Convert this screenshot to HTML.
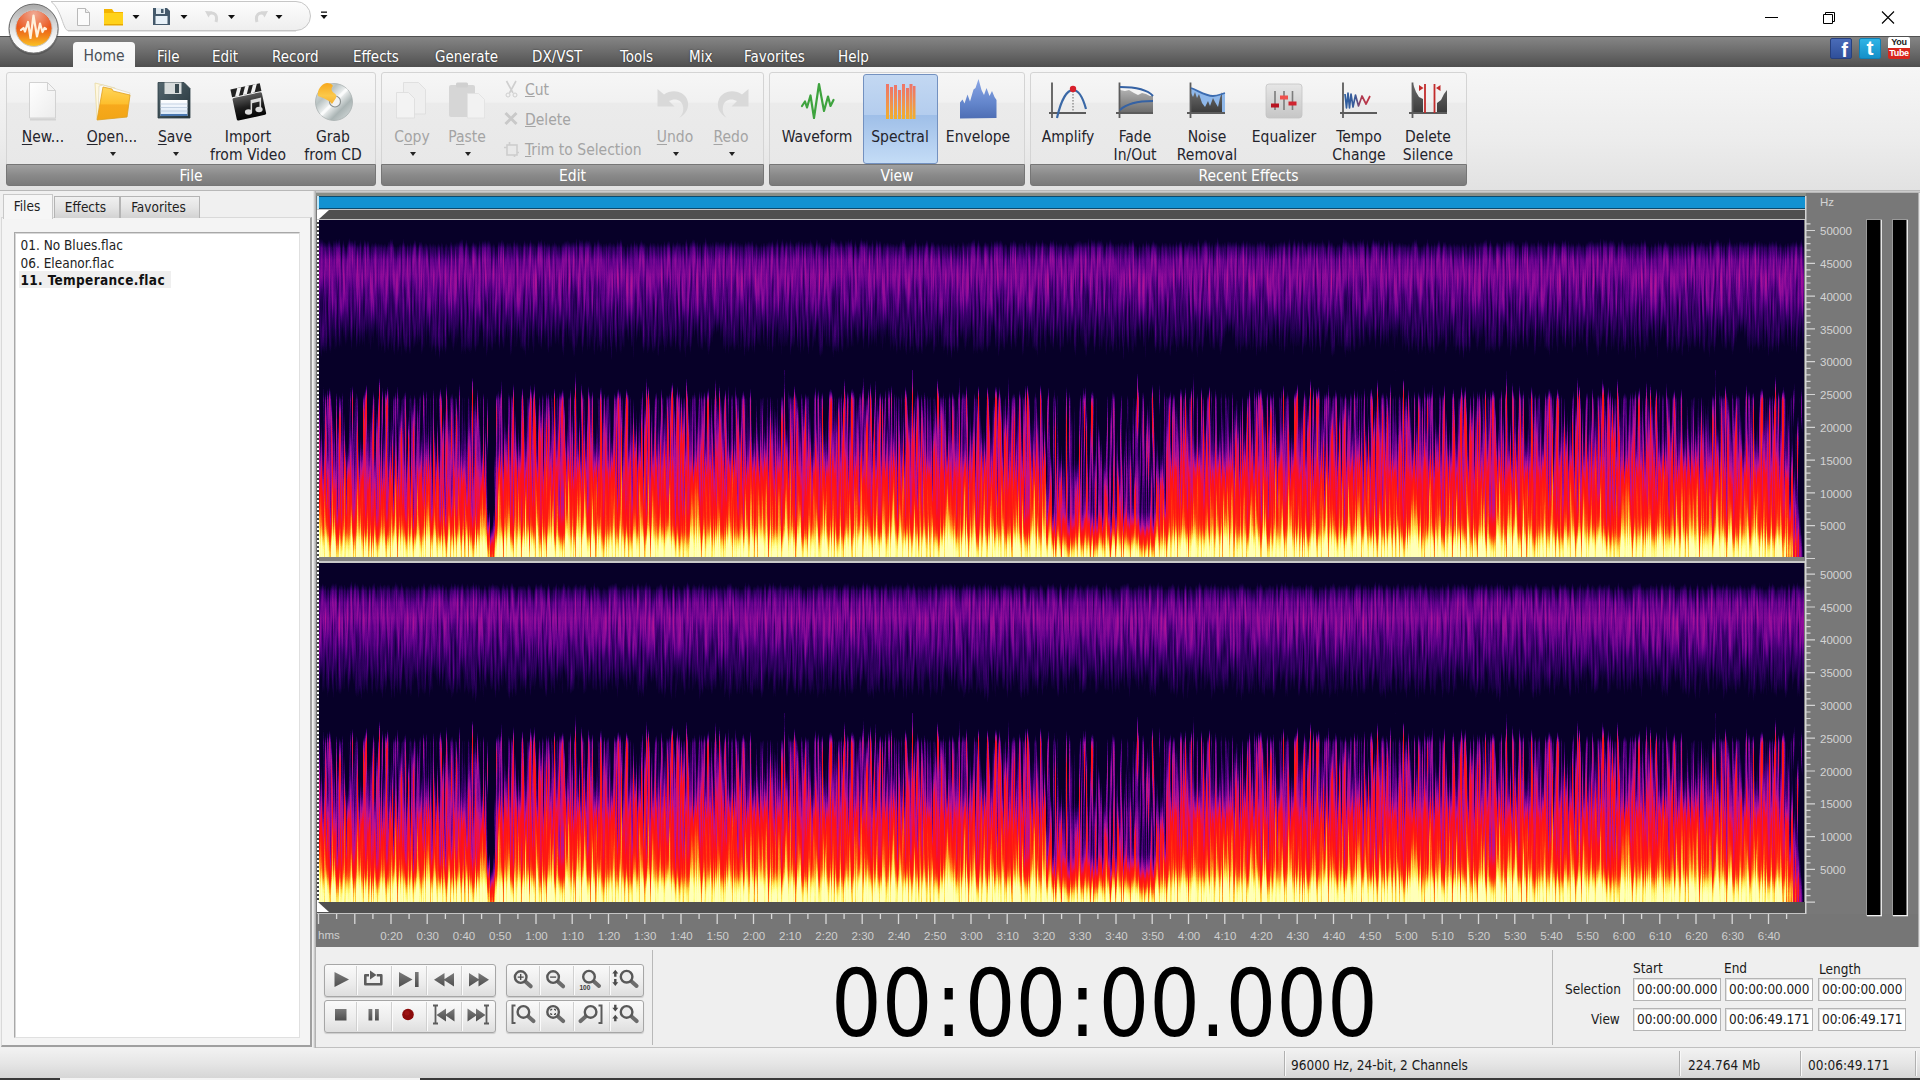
<!DOCTYPE html>
<html lang="en"><head><meta charset="utf-8"><title>Audio Editor</title>
<style>
html,body{margin:0;padding:0;width:1920px;height:1080px;overflow:hidden;background:#f0f0f0;font-family:"DejaVu Sans Condensed","Liberation Sans",sans-serif;}
*{box-sizing:border-box}
.abs{position:absolute}
#titlebar{left:0;top:0;width:1920px;height:36px;background:#fff}
#menubar{left:0;top:36px;width:1920px;height:32px;background:linear-gradient(#858585 0%,#6d6d6d 45%,#565656 85%,#4c4c4c 100%);border-top:1px solid #505050}
#ribbon{left:0;top:67px;width:1920px;height:124px;background:linear-gradient(#f6f6f6,#ececec 60%,#e2e2e2);border-bottom:1px solid #b8b8b8}
.mtab{position:absolute;top:47.5px;height:18px;color:#fff;font-size:15px;line-height:18px;white-space:nowrap;text-shadow:0 0 2px rgba(0,0,0,.6)}
#hometab{left:73px;top:42px;width:62px;height:26px;background:linear-gradient(#fafafa,#f4f4f4);border-radius:4px 4px 0 0;color:#4a5058;font-size:15.5px;line-height:29px;text-align:center}
.grp{position:absolute;top:72px;height:114px;border:1px solid #d4d4d4;border-radius:3px;background:linear-gradient(#f6f6f6 0%,#f1f1f1 26%,#ebebeb 27%,#e7e7e7 100%)}
.grp .lbl{position:absolute;left:-1px;right:-1px;bottom:-1px;height:22px;background:linear-gradient(#a0a0a0,#8a8a8a 50%,#7a7a7a);border:1px solid #767676;border-radius:0 0 3px 3px;color:#fff;font-size:15.5px;line-height:23px;text-align:center}
.rb{position:absolute;font-size:15.5px;line-height:17.5px;color:#24242c;text-align:center;white-space:nowrap;transform:translateX(-50%)}
.rb.dis{color:#a4a4a4}
.rb u{text-decoration-thickness:1px;text-underline-offset:2px}
.arr{position:absolute;width:0;height:0;border-left:3.5px solid transparent;border-right:3.5px solid transparent;border-top:4px solid #222}
.sb{position:absolute;font-size:15.5px;color:#a4a4a4;white-space:nowrap;line-height:18px}
</style></head><body>
<div id="titlebar" class="abs"></div>
<div id="menubar" class="abs"></div>
<div id="ribbon" class="abs"></div>
<!-- quick access toolbar -->
<svg class="abs" id="qat" style="left:44px;top:0" width="272" height="36" viewBox="44 0 272 36"><defs><linearGradient id="qg" x1="0" y1="0" x2="0" y2="1"><stop offset="0" stop-color="#fdfdfd"/><stop offset="1" stop-color="#eeeeee"/></linearGradient></defs>
<path d="M51 1.500H296a14.500 14.500 0 0 1 0 29H68C63 30.500 62 10 51 1.500z" fill="url(#qg)" stroke="#c6c6c6" stroke-width="1"/><path d="M68 31.500H296" stroke="#e4e4e4" stroke-width="1"/></svg>
<svg class="abs" style="left:60px;top:0" width="280" height="36" viewBox="60 0 280 36">
 <!-- new doc -->
 <path d="M77.5 8.5h8l4 4v13h-12z" fill="#fbfbfb" stroke="#b9b9b9"/><path d="M85.5 8.5v4h4" fill="#eee" stroke="#b9b9b9"/>
 <!-- folder -->
 <path d="M104 9h8l2 3h9v13h-19z" fill="#f4b400"/><path d="M104 13h19v12h-19z" fill="#ffd21a"/><path d="M104 24h19v1.500h-19z" fill="#e6a800"/>
 <!-- save -->
 <path d="M153 8h14l3 3v14h-17z" fill="#44596b"/><rect x="156" y="8" width="9" height="6" fill="#dfe8ee"/><rect x="161" y="9" width="2.500" height="4" fill="#44596b"/><rect x="155.500" y="16" width="12" height="8" fill="#e8f1f8"/>
 <!-- undo / redo (disabled) -->
 <path d="M208 14c6-3 10 1 8 8" fill="none" stroke="#d6d6d6" stroke-width="3"/><path d="M205 11l7 .5-3.500 6z" fill="#d6d6d6"/>
 <path d="M265 14c-6-3-10 1-8 8" fill="none" stroke="#d6d6d6" stroke-width="3"/><path d="M268 11l-7 .5 3.500 6z" fill="#d6d6d6"/>
 <!-- dropdown arrows -->
 <g fill="#111"><path d="M132.500 15h7l-3.500 4z"/><path d="M180.500 15h7l-3.500 4z"/><path d="M228 15h7l-3.500 4z"/><path d="M275.500 15h7l-3.500 4z"/>
 <path d="M320.500 15h7l-3.500 4z"/><rect x="321" y="11.500" width="6" height="1.300"/></g>
</svg>
<!-- app orb -->
<svg class="abs" style="left:4px;top:0" width="62" height="60" viewBox="4 0 62 60">
 <defs>
  <linearGradient id="orbR" x1="0" y1="0" x2="0" y2="1"><stop offset="0" stop-color="#a9a9a9"/><stop offset="0.35" stop-color="#d2d2d2"/><stop offset="0.7" stop-color="#f6f6f6"/><stop offset="1" stop-color="#ffffff"/></linearGradient>
  <linearGradient id="orbC" x1="0" y1="0" x2="0" y2="1"><stop offset="0" stop-color="#e2552a"/><stop offset="0.45" stop-color="#ea5518"/><stop offset="0.72" stop-color="#f2861a"/><stop offset="1" stop-color="#fbc426"/></linearGradient>
  <radialGradient id="orbG" cx="0.5" cy="0.1" r="0.6"><stop offset="0" stop-color="#fff" stop-opacity=".5"/><stop offset="1" stop-color="#fff" stop-opacity="0"/></radialGradient>
 </defs>
 <circle cx="33.600" cy="29.600" r="25.500" fill="rgba(0,0,0,.16)"/>
 <circle cx="33.600" cy="28.600" r="24.500" fill="url(#orbR)" stroke="#6e6e6e" stroke-width="1"/>
 <circle cx="33.900" cy="28.300" r="18.200" fill="url(#orbC)" stroke="#c9c9c9" stroke-width="1"/>
 <circle cx="33.900" cy="28.300" r="17.600" fill="url(#orbG)"/>
 <path d="M21 30l2.500-2 1.500 3.500 3-9.500 2.500 16 3-22.500 3.500 21 3-13 2.500 8.500 2-4 1.500 1" fill="none" stroke="#fff1dc" stroke-width="2.200" stroke-linejoin="round" stroke-linecap="round"/>
</svg>
<!-- window controls -->
<svg class="abs" style="left:1750px;top:0" width="170" height="36" viewBox="1750 0 170 36">
 <path d="M1765 17.500h13" stroke="#000" stroke-width="1"/>
 <path d="M1823.500 14.500h9v9h-9z M1825.500 14.500v-2h9v9h-2" fill="none" stroke="#000" stroke-width="1"/>
 <path d="M1882 11.500l12 12m0-12l-12 12" stroke="#000" stroke-width="1.100"/>
</svg>
<!-- social icons -->
<div class="abs" style="left:1830px;top:38px;width:22px;height:21px;background:linear-gradient(#4a6cb8,#2f4f9a);border:1px solid #27407e;border-radius:2px;color:#fff;font:bold 20px/23px 'Liberation Sans',sans-serif;text-align:right;padding-right:3px;overflow:hidden">f</div>
<div class="abs" style="left:1859px;top:38px;width:22px;height:21px;background:linear-gradient(#2fb4e6,#1590c8);border:1px solid #0f7fb4;border-radius:2px;color:#fff;font:bold 21px/17px 'Liberation Sans',sans-serif;text-align:center;overflow:hidden">t</div>
<div class="abs" style="left:1888px;top:37px;width:22px;height:11px;background:#fff;border-radius:2px 2px 0 0;color:#222;font:bold 9px/11px 'Liberation Sans',sans-serif;text-align:center;letter-spacing:-.3px">You</div>
<div class="abs" style="left:1888px;top:48px;width:22px;height:11px;background:#d8261c;border-radius:0 0 2px 2px;color:#fff;font:bold 9px/11px 'Liberation Sans',sans-serif;text-align:center;letter-spacing:-.3px">Tube</div>
<!-- menu tabs -->
<div id="hometab" class="abs">Home</div>
<div class="mtab" style="left:157px">File</div>
<div class="mtab" style="left:212px">Edit</div>
<div class="mtab" style="left:272px">Record</div>
<div class="mtab" style="left:353px">Effects</div>
<div class="mtab" style="left:435px">Generate</div>
<div class="mtab" style="left:532px">DX/VST</div>
<div class="mtab" style="left:620px">Tools</div>
<div class="mtab" style="left:689px">Mix</div>
<div class="mtab" style="left:744px">Favorites</div>
<div class="mtab" style="left:838px">Help</div>
<!-- ribbon groups -->
<div class="grp" style="left:6px;width:370px"><div class="lbl">File</div></div>
<div class="grp" style="left:381px;width:383px"><div class="lbl">Edit</div></div>
<div class="grp" style="left:769px;width:256px"><div class="lbl">View</div></div>
<div class="grp" style="left:1030px;width:437px"><div class="lbl">Recent Effects</div></div>
<div class="abs" style="left:863px;top:74px;width:75px;height:90px;border:1px solid #7391c0;border-radius:3px;background:linear-gradient(#c3d8f2 0%,#b4cdee 45%,#9fbfe8 46%,#c4dcf6 100%)"></div>
<!-- ribbon button labels -->
<div class="rb" style="left:43px;top:129px"><u>N</u>ew...</div>
<div class="rb" style="left:112px;top:129px"><u>O</u>pen...</div><div class="arr" style="left:109.500px;top:151.500px"></div>
<div class="rb" style="left:175px;top:129px"><u>S</u>ave</div><div class="arr" style="left:172.500px;top:151.500px"></div>
<div class="rb" style="left:248px;top:129px">Import<br>from Video</div>
<div class="rb" style="left:333px;top:129px">Grab<br>from CD</div>
<div class="rb dis" style="left:412px;top:129px">C<u>o</u>py</div><div class="arr" style="left:409.500px;top:151.500px"></div>
<div class="rb dis" style="left:467px;top:129px">P<u>a</u>ste</div><div class="arr" style="left:464.500px;top:151.500px"></div>
<div class="sb" style="left:525px;top:80.5px"><u>C</u>ut</div>
<div class="sb" style="left:525px;top:110.5px"><u>D</u>elete</div>
<div class="sb" style="left:525px;top:140.5px"><u>T</u>rim to Selection</div>
<div class="rb dis" style="left:675px;top:129px"><u>U</u>ndo</div><div class="arr" style="left:672.500px;top:151.500px"></div>
<div class="rb dis" style="left:731px;top:129px"><u>R</u>edo</div><div class="arr" style="left:728.500px;top:151.500px"></div>
<div class="rb" style="left:817px;top:129px">Waveform</div>
<div class="rb" style="left:900px;top:129px">Spectral</div>
<div class="rb" style="left:978px;top:129px">Envelope</div>
<div class="rb" style="left:1068px;top:129px">Amplify</div>
<div class="rb" style="left:1135px;top:129px">Fade<br>In/Out</div>
<div class="rb" style="left:1207px;top:129px">Noise<br>Removal</div>
<div class="rb" style="left:1284px;top:129px">Equalizer</div>
<div class="rb" style="left:1359px;top:129px">Tempo<br>Change</div>
<div class="rb" style="left:1428px;top:129px">Delete<br>Silence</div>
<!-- ribbon icons -->
<svg class="abs" style="left:0;top:67px" width="1920" height="124" viewBox="0 67 1920 124">
<defs>
 <linearGradient id="iPage" x1="0" y1="0" x2="1" y2="1"><stop offset="0" stop-color="#ffffff"/><stop offset="1" stop-color="#ececec"/></linearGradient>
 <linearGradient id="iFold" x1="0" y1="0" x2="0" y2="1"><stop offset="0" stop-color="#ffd65a"/><stop offset="0.5" stop-color="#fdbf2e"/><stop offset="0.55" stop-color="#f7a91c"/><stop offset="1" stop-color="#f2a516"/></linearGradient>
 <linearGradient id="iFlop" x1="0" y1="0" x2="1" y2="1"><stop offset="0" stop-color="#55676f"/><stop offset="1" stop-color="#25343a"/></linearGradient>
 <linearGradient id="iLbl" x1="0" y1="0" x2="0" y2="1"><stop offset="0" stop-color="#ffffff"/><stop offset="1" stop-color="#d6e6f6"/></linearGradient>
 <linearGradient id="iClap" x1="0" y1="0" x2="0" y2="1"><stop offset="0" stop-color="#5a5a5a"/><stop offset="0.5" stop-color="#1e1e1e"/><stop offset="1" stop-color="#050505"/></linearGradient>
 <linearGradient id="iCd" x1="0" y1="0" x2="1" y2="1"><stop offset="0" stop-color="#e8ecec"/><stop offset="0.3" stop-color="#b8c2c2"/><stop offset="0.5" stop-color="#f4f6f6"/><stop offset="0.7" stop-color="#aab4b4"/><stop offset="1" stop-color="#dfe4e4"/></linearGradient>
 <linearGradient id="iFlame" x1="0" y1="0" x2="0" y2="1"><stop offset="0" stop-color="#f7a81c"/><stop offset="0.6" stop-color="#fbc84a"/><stop offset="1" stop-color="#f6b030"/></linearGradient>
 <linearGradient id="iSpec" x1="0" y1="0" x2="0" y2="1"><stop offset="0" stop-color="#ee7468"/><stop offset="0.5" stop-color="#f09050"/><stop offset="1" stop-color="#f2b02a"/></linearGradient>
 <linearGradient id="iEnv" x1="0" y1="0" x2="0" y2="1"><stop offset="0" stop-color="#8aa6e6"/><stop offset="0.6" stop-color="#6486cc"/><stop offset="1" stop-color="#4e6eb4"/></linearGradient>
 <linearGradient id="iGray" x1="0" y1="0" x2="0" y2="1"><stop offset="0" stop-color="#b0b0b0"/><stop offset="1" stop-color="#6a6a6a"/></linearGradient>
 <linearGradient id="iDark" x1="0" y1="0" x2="0" y2="1"><stop offset="0" stop-color="#6a6a6a"/><stop offset="1" stop-color="#3a3a3a"/></linearGradient>
 <linearGradient id="iEq" x1="0" y1="0" x2="0" y2="1"><stop offset="0" stop-color="#e6e6e6"/><stop offset="1" stop-color="#c6c6c6"/></linearGradient>
 <linearGradient id="iTempo" gradientUnits="userSpaceOnUse" x1="1345" y1="0" x2="1375" y2="0"><stop offset="0" stop-color="#2f5fa0"/><stop offset="0.35" stop-color="#3a5a98"/><stop offset="0.55" stop-color="#b03a50"/><stop offset="1" stop-color="#c8303c"/></linearGradient>
</defs>
<!-- New -->
<path d="M30 119.500h26" stroke="#c8c8c8" stroke-width="2" opacity=".7"/>
<path d="M29.500 82.500h18l8 8v27.500h-26z" fill="url(#iPage)" stroke="#d2d2d2"/>
<path d="M47.500 82.500v8h8z" fill="#f4f4f4" stroke="#d2d2d2" stroke-linejoin="round"/>
<!-- Open -->
<path d="M95 83l20 5v30l-18 1z" fill="#fff8e0" stroke="#e8d9a0" stroke-width=".8"/>
<path d="M99 86l4-1 27 8-3 24-29 2z" fill="#fafafa" stroke="#d8d0b0" stroke-width=".6"/>
<path d="M103 87l9 2 1 2 17 4-3 22-30 3z" fill="url(#iFold)" stroke="#e0a020" stroke-width=".8"/>
<!-- Save -->
<path d="M158 82.500h26l6 6v29.500h-32z" fill="url(#iFlop)" stroke="#2c3c44" stroke-width=".8"/>
<rect x="164.500" y="82.500" width="17" height="11.500" fill="#d8dcdc"/><rect x="175" y="84" width="4" height="9" fill="#3a4a50"/>
<rect x="160.500" y="100" width="27" height="16" fill="url(#iLbl)"/><path d="M160.500 104h27M160.500 107.500h27M160.500 111h27" stroke="#b8c8dc" stroke-width=".8"/><rect x="160.500" y="114" width="27" height="2" fill="#4a78b0"/>
<!-- Import from video -->
<g transform="rotate(-12 248 100)">
 <rect x="233" y="95" width="30" height="23" rx="1.500" fill="url(#iClap)"/>
 <rect x="233" y="86" width="30" height="8" fill="#222"/>
 <path d="M236 94l4-8h4l-4 8zM244 94l4-8h4l-4 8zM252 94l4-8h4l-4 8z" fill="#f2f2f2"/>
</g>
<g fill="#dcdcdc"><ellipse cx="248.500" cy="112" rx="3.600" ry="2.800"/><ellipse cx="259" cy="109.500" rx="3.600" ry="2.800"/><path d="M250.600 112v-12l10.500-2.500v12h-1.600v-8l-7.400 1.800v8.700z"/></g>
<!-- Grab from CD -->
<circle cx="334" cy="102" r="18.500" fill="url(#iCd)" stroke="#a8b0b0" stroke-width=".8"/>
<path d="M334 102L347 89M334 102L321 115" stroke="#fff" stroke-width="3" opacity=".7"/>
<circle cx="335" cy="101.500" r="5.500" fill="#f2f2f2" stroke="#8a9090" stroke-width="1.200"/>
<path d="M318 96c-1-6 3-12 9-13 3 0 5 1 6 3-2 2-2 5 1 7 2 1 3 3 2 5l-4 6c-3-4-9-6-14-8z" fill="url(#iFlame)"/>
<!-- Copy (disabled) -->
<g fill="#efefef" stroke="#dedede" stroke-width=".9"><path d="M403.500 82.500h15l7 7v24.500h-22z"/><path d="M396.500 92.500h12l6 6v19.500h-18z" fill="#f3f3f3"/></g>
<!-- Paste (disabled) -->
<rect x="449" y="85" width="26" height="32" rx="2" fill="#d6d6d6"/><rect x="456" y="82.500" width="12" height="5" rx="1.500" fill="#d0d0d0"/>
<path d="M467.500 93.500h11l6 6v18.500h-17z" fill="#f2f2f2" stroke="#e2e2e2" stroke-width=".9"/>
<!-- Cut / Delete / Trim small (disabled) -->
<g stroke="#cfcfcf" fill="none"><path d="M506.500 81l6.500 12M516 81l-6.500 12" stroke-width="1.600"/><circle cx="508" cy="95" r="2"/><circle cx="515" cy="95" r="2"/></g>
<path d="M505.500 113l11 11M516.500 113l-11 11" stroke="#c9c9c9" stroke-width="3"/>
<g stroke="#cdcdcd" fill="none" stroke-width="1.600"><rect x="507" y="145" width="10" height="10"/><path d="M504 147.500h3M509.500 142v3M517 152.500h2M514.500 155v2"/></g>
<!-- Undo / Redo (disabled) -->
<path d="M657.500 89v17.500h17l-5.500-5.500c6-3.500 13-1 14 5.500 1 5-1 9-4 11.500 8-4 11-12 8-19-3.500-8-15-10.500-23-4.500z" fill="#d9d9d9"/>
<path d="M748.500 89v17.500h-17l5.500-5.500c-6-3.500-13-1-14 5.500-1 5 1 9 4 11.500-8-4-11-12-8-19 3.500-8 15-10.500 23-4.500z" fill="#d9d9d9"/>
<!-- Waveform -->
<path d="M802 106l3-4.500 2 6 3.500-12 3.500 22.500 5-34 5 27 4-14.500 2.500 9.500 3-6" fill="none" stroke="#3ea33e" stroke-width="2.200" stroke-linejoin="round" stroke-linecap="round"/>
<!-- Spectral -->
<g fill="url(#iSpec)"><rect x="886" y="84" width="3" height="35"/><rect x="890" y="87" width="3" height="32"/><rect x="894" y="85" width="3" height="34"/><rect x="898" y="90" width="3" height="29"/><rect x="902" y="84" width="3" height="35"/><rect x="906" y="88" width="3" height="31"/><rect x="909.500" y="84" width="3" height="35"/><rect x="913" y="86" width="2.500" height="33"/></g>
<!-- Envelope -->
<path d="M960 118.500v-16l2.500-3 2 4 3-9 2.500 7 3.500-12 2-1.500 3-9 3 11 2.500 5 2.500-7 3 8 2.500-5 2.500 6 2 3v18z" fill="url(#iEnv)"/>
<!-- Amplify -->
<path d="M1052 82.500v35.500M1049 113h37" stroke="#5c5c5c" stroke-width="1.800"/>
<path d="M1073 91v21" stroke="#666" stroke-width="1" stroke-dasharray="1.500 1.500"/>
<path d="M1057 118c4-18 10-28 16-28s10 8 13 19" fill="none" stroke="#3a68a6" stroke-width="2.200"/>
<circle cx="1073" cy="89" r="3.200" fill="#d8202c"/>
<!-- Fade -->
<path d="M1120 113V90l5 1 4-1 5 3 4 2 4-2 4 1 4 2 3 0v17z" fill="url(#iGray)"/>
<path d="M1119.500 82.500v35.500M1116 113h37" stroke="#5c5c5c" stroke-width="1.800"/>
<path d="M1120 87c14 0 27 2 33 9M1120 110c6-6 18-9 33-9" fill="none" stroke="#3562a4" stroke-width="2"/>
<!-- Noise removal -->
<path d="M1191 113V88c8 3 14 8 22 8 5 0 8-2 12-3v20z" fill="#8fb8ea"/>
<path d="M1191 113V93l2 4 2-5 2 6 2-4 3 9 3 4 3-6 2 5 3-8 2 4 3 5 2-9 2-6v21z" fill="url(#iDark)"/>
<path d="M1190.500 82.500v35.500M1187 113h38" stroke="#5c5c5c" stroke-width="1.800"/>
<path d="M1191 88c8 3 14 8 22 8 5 0 8-2 12-3" fill="none" stroke="#3c6cb0" stroke-width="1.800"/>
<!-- Equalizer -->
<rect x="1266" y="84" width="36" height="34" rx="3" fill="url(#iEq)" stroke="#c4c4c4" stroke-width=".8"/>
<path d="M1275 91v19M1284 91v19M1292.500 91v19" stroke="#7c7c7c" stroke-width="1.600"/>
<rect x="1271" y="103.500" width="8" height="4" fill="#b81422"/><rect x="1280" y="95.500" width="8" height="4" fill="#f0504c"/><rect x="1288.500" y="101.500" width="8" height="4" fill="#d02430"/>
<!-- Tempo -->
<path d="M1343 82.500v35.500M1340 113h37" stroke="#5c5c5c" stroke-width="1.800"/>
<path d="M1345 94l1.500 14 1.500-15 1.500 15 1.500-14 2 13 2.500-12 3 11 3.500-10 4 8 4-8" fill="none" stroke="url(#iTempo)" stroke-width="1.700" stroke-linejoin="round"/>
<!-- Delete silence -->
<path d="M1413 113V84l3 8 3 5 4 2v14zM1437 113v-10l4-3 3-6 3-4v23z" fill="url(#iDark)"/>
<path d="M1412.500 82.500v35.500M1409 113h38" stroke="#5c5c5c" stroke-width="1.800"/>
<path d="M1425 84v29M1434.500 84v29" stroke="#c22c2c" stroke-width="1.800"/>
<path d="M1419 85l4.500 3-4.500 3zM1440.500 85l-4.500 3 4.500 3z" fill="#c22c2c"/>
</svg>
<!-- left panel -->
<div class="abs" style="left:0;top:191px;width:316px;height:857px;background:#f0f0f0"></div>
<div class="abs" style="left:1px;top:217px;width:311px;height:830px;background:#f4f4f4;border:1px solid #d9d9d9;border-right:2px solid #a0a0a0;border-bottom:2px solid #a0a0a0"></div>
<div class="abs" style="left:54px;top:196px;width:66px;padding-right:3px;height:22px;border:1px solid #b4b4b4;border-bottom:none;background:linear-gradient(#f0f0f0,#e4e4e4 50%,#d2d2d2);font-size:13.5px;line-height:21px;text-align:center;color:#1e1e1e">Effects</div>
<div class="abs" style="left:120px;top:196px;width:80px;padding-right:3px;height:22px;border:1px solid #b4b4b4;border-bottom:none;background:linear-gradient(#f0f0f0,#e4e4e4 50%,#d2d2d2);font-size:13.5px;line-height:21px;text-align:center;color:#1e1e1e">Favorites</div>
<div class="abs" style="left:3px;top:194px;width:50px;height:25px;border:1px solid #c8c8c8;border-bottom:none;background:#f6f6f6;font-size:13.5px;line-height:23px;text-align:center;color:#1e1e1e;padding-right:2px">Files</div>
<div class="abs" style="left:14px;top:232px;width:286px;height:806px;background:#fff;border:1px solid #a8a8a8;border-right-color:#e0e0e0;border-bottom-color:#e0e0e0;box-shadow:inset 1px 1px 0 #d8d8d8"></div>
<div class="abs" style="left:19px;top:271px;width:152px;height:17px;background:#efefef"></div>
<div class="abs" style="left:20.500px;top:237px;font-size:13.5px;line-height:17.5px;color:#222;white-space:nowrap">01. No Blues.flac<br>06. Eleanor.flac<br><b style="color:#111;letter-spacing:.35px">11. Temperance.flac</b></div>
<!-- waveform area -->
<div class="abs" style="left:313px;top:191px;width:3px;height:857px;background:linear-gradient(90deg,#f0f0f0,#d0d0d0 40%,#a8a8a8)"></div>
<div class="abs" style="left:316px;top:191px;width:1604px;height:3px;background:linear-gradient(#d6d6d6,#9a9a9a)"></div>
<div class="abs" style="left:316px;top:193px;width:1604px;height:754px;background:#787878"></div>
<div class="abs" style="left:316px;top:193px;width:1490px;height:3px;background:#8a8f88"></div>
<div class="abs" style="left:319px;top:196px;width:1486px;height:13px;background:#1292d2;border-top:1.5px solid #0b4a6e;border-bottom:1.5px solid #0b4a6e"></div>
<div class="abs" style="left:317px;top:196px;width:2px;height:13px;background:#bfe6f7"></div>
<div class="abs" style="left:317px;top:209px;width:1488px;height:11px;background:#505050;border-top:1px solid #c4c4c4;border-bottom:1px solid #c4c4c4"></div>
<svg class="abs" style="left:317px;top:210px" width="13" height="10"><path d="M0 0h12L2 9H0z" fill="#fff"/></svg>
<div class="abs" style="left:317px;top:220px;width:2px;height:682px;background:repeating-linear-gradient(#fff 0 2px,#404040 2px 4px)"></div>
<div class="abs" style="left:319px;top:557px;width:1486px;height:6px;background:linear-gradient(#808080 0 4px,#c8c8c8 4px 5.5px,#444 5.5px)"></div>
<svg class="abs" width="1485" height="337" style="left:319px;top:220px"><defs>
<linearGradient id="gU1" gradientUnits="userSpaceOnUse" x1="0" y1="0" x2="0" y2="150"><stop offset="0.0000" stop-color="rgb(34,34,34)"/><stop offset="0.0800" stop-color="rgb(51,51,51)"/><stop offset="0.1333" stop-color="rgb(76,76,76)"/><stop offset="0.1867" stop-color="rgb(102,102,102)"/><stop offset="0.2667" stop-color="rgb(117,117,117)"/><stop offset="0.3667" stop-color="rgb(121,121,121)"/><stop offset="0.5333" stop-color="rgb(112,112,112)"/><stop offset="0.7000" stop-color="rgb(100,100,100)"/><stop offset="0.8333" stop-color="rgb(87,87,87)"/><stop offset="0.9333" stop-color="rgb(68,68,68)"/><stop offset="1.0000" stop-color="rgb(17,17,17)"/></linearGradient>
<linearGradient id="gL1" gradientUnits="userSpaceOnUse" x1="0" y1="0" x2="0" y2="188"><stop offset="0.0000" stop-color="rgb(0,0,0)"/><stop offset="0.0426" stop-color="rgb(6,6,6)"/><stop offset="0.0851" stop-color="rgb(28,28,28)"/><stop offset="0.1277" stop-color="rgb(57,57,57)"/><stop offset="0.1596" stop-color="rgb(78,78,78)"/><stop offset="0.2340" stop-color="rgb(88,88,88)"/><stop offset="0.3191" stop-color="rgb(96,96,96)"/><stop offset="0.4255" stop-color="rgb(108,108,108)"/><stop offset="0.5319" stop-color="rgb(122,122,122)"/><stop offset="0.6117" stop-color="rgb(132,132,132)"/><stop offset="0.6915" stop-color="rgb(142,142,142)"/><stop offset="0.7713" stop-color="rgb(153,153,153)"/><stop offset="0.8245" stop-color="rgb(164,164,164)"/><stop offset="0.8670" stop-color="rgb(178,178,178)"/><stop offset="0.9043" stop-color="rgb(194,194,194)"/><stop offset="0.9362" stop-color="rgb(205,205,205)"/><stop offset="0.9681" stop-color="rgb(212,212,212)"/><stop offset="1.0000" stop-color="rgb(212,212,212)"/></linearGradient>
<linearGradient id="gp1" x1="0" y1="0" x2="0" y2="1"><stop offset="0" stop-color="#000" stop-opacity="0.2"/><stop offset="0.72" stop-color="#000" stop-opacity="0.27"/><stop offset="0.88" stop-color="#000" stop-opacity="0.12"/><stop offset="0.96" stop-color="#000" stop-opacity="0.02"/><stop offset="1" stop-color="#000" stop-opacity="0"/></linearGradient>
<linearGradient id="gn1" x1="0" y1="0" x2="0" y2="1"><stop offset="0" stop-color="#000" stop-opacity="0.8"/><stop offset="0.7" stop-color="#000" stop-opacity="0.7"/><stop offset="0.85" stop-color="#000" stop-opacity="0.35"/><stop offset="1" stop-color="#000" stop-opacity="0.08"/></linearGradient>
<linearGradient id="gw1" x1="0" y1="0" x2="0" y2="1"><stop offset="0" stop-color="#000" stop-opacity="0.1"/><stop offset="0.7" stop-color="#000" stop-opacity="0.08"/><stop offset="1" stop-color="#000" stop-opacity="0"/></linearGradient>
<linearGradient id="ge1" x1="0" y1="0" x2="1" y2="0"><stop offset="0" stop-color="#000" stop-opacity="0"/><stop offset="0.3" stop-color="#000" stop-opacity="0.1"/><stop offset="1" stop-color="#000" stop-opacity="0.62"/></linearGradient>
<linearGradient id="gs1" x1="0" y1="0" x2="1" y2="0"><stop offset="0" stop-color="#000" stop-opacity="0.5"/><stop offset="1" stop-color="#000" stop-opacity="0"/></linearGradient>
<filter id="bl1" x="-20%" y="-5%" width="140%" height="110%"><feGaussianBlur stdDeviation="1.3 0"/></filter>
<filter id="fU1" x="0" y="0" width="100%" height="100%" color-interpolation-filters="sRGB"><feTurbulence type="fractalNoise" baseFrequency="0.5 0.02" numOctaves="2" seed="5"/><feColorMatrix type="matrix" values="1 0 0 0 0  1 0 0 0 0  1 0 0 0 0  0 0 0 0 1"/><feComposite in="SourceGraphic" operator="arithmetic" k1="0" k2="1.5" k3="0.3" k4="-0.65"/><feComponentTransfer><feFuncR type="table" tableValues="0.031 0.098 0.216 0.384 0.557 0.714 0.878 0.980 1.000 1.000 1.000 1.000 1.000 1.000 1.000 1.000 1.000 1.000"/><feFuncG type="table" tableValues="0.000 0.000 0.000 0.008 0.047 0.078 0.071 0.059 0.078 0.098 0.137 0.235 0.392 0.588 0.804 0.941 1.000 1.000"/><feFuncB type="table" tableValues="0.157 0.275 0.412 0.549 0.604 0.588 0.384 0.157 0.078 0.071 0.059 0.059 0.078 0.137 0.235 0.392 0.588 0.725"/></feComponentTransfer></filter>
<filter id="fL1" x="0" y="0" width="100%" height="100%" color-interpolation-filters="sRGB"><feTurbulence type="fractalNoise" baseFrequency="0.55 0.01" numOctaves="2" seed="11"/><feColorMatrix type="matrix" values="1 0 0 0 0  1 0 0 0 0  1 0 0 0 0  0 0 0 0 1" result="n"/><feComponentTransfer in="n" result="n3"><feFuncR type="gamma" amplitude="2" exponent="3"/><feFuncG type="gamma" amplitude="2" exponent="3"/><feFuncB type="gamma" amplitude="2" exponent="3"/></feComponentTransfer><feComposite in="SourceGraphic" in2="n" operator="arithmetic" k1="0.5000" k2="0.6500" k3="0.0000" k4="-0.0000" result="A"/><feComposite in="A" in2="n3" operator="arithmetic" k1="-1.1700" k2="2.2925" k3="0.8400" k4="-0.7100"/><feComponentTransfer><feFuncR type="table" tableValues="0.031 0.098 0.216 0.384 0.557 0.714 0.878 0.980 1.000 1.000 1.000 1.000 1.000 1.000 1.000 1.000 1.000 1.000"/><feFuncG type="table" tableValues="0.000 0.000 0.000 0.008 0.047 0.078 0.071 0.059 0.078 0.098 0.137 0.235 0.392 0.588 0.804 0.941 1.000 1.000"/><feFuncB type="table" tableValues="0.157 0.275 0.412 0.549 0.604 0.588 0.384 0.157 0.078 0.071 0.059 0.059 0.078 0.137 0.235 0.392 0.588 0.725"/></feComponentTransfer></filter>
</defs>
<g filter="url(#fU1)"><rect width="1485" height="150" fill="url(#gU1)"/></g>
<g transform="translate(0,150)"><g filter="url(#fL1)"><rect width="1485" height="196" fill="url(#gL1)"/><rect x="0" y="0" width="170" height="196" fill="url(#gw1)"/><rect x="727" y="0" width="120" height="196" fill="url(#gp1)"/><rect x="168.5" y="0" width="7.5" height="196" fill="url(#gn1)" filter="url(#bl1)"/><rect x="1461" y="0" width="24" height="196" fill="url(#ge1)"/></g></g>
</svg>
<svg class="abs" width="1485" height="339" style="left:319px;top:563px"><defs>
<linearGradient id="gU2" gradientUnits="userSpaceOnUse" x1="0" y1="0" x2="0" y2="150"><stop offset="0.0000" stop-color="rgb(34,34,34)"/><stop offset="0.0800" stop-color="rgb(51,51,51)"/><stop offset="0.1333" stop-color="rgb(76,76,76)"/><stop offset="0.1867" stop-color="rgb(102,102,102)"/><stop offset="0.2667" stop-color="rgb(117,117,117)"/><stop offset="0.3667" stop-color="rgb(121,121,121)"/><stop offset="0.5333" stop-color="rgb(112,112,112)"/><stop offset="0.7000" stop-color="rgb(100,100,100)"/><stop offset="0.8333" stop-color="rgb(87,87,87)"/><stop offset="0.9333" stop-color="rgb(68,68,68)"/><stop offset="1.0000" stop-color="rgb(17,17,17)"/></linearGradient>
<linearGradient id="gL2" gradientUnits="userSpaceOnUse" x1="0" y1="0" x2="0" y2="188"><stop offset="0.0000" stop-color="rgb(0,0,0)"/><stop offset="0.0426" stop-color="rgb(6,6,6)"/><stop offset="0.0851" stop-color="rgb(28,28,28)"/><stop offset="0.1277" stop-color="rgb(57,57,57)"/><stop offset="0.1596" stop-color="rgb(78,78,78)"/><stop offset="0.2340" stop-color="rgb(88,88,88)"/><stop offset="0.3191" stop-color="rgb(96,96,96)"/><stop offset="0.4255" stop-color="rgb(108,108,108)"/><stop offset="0.5319" stop-color="rgb(122,122,122)"/><stop offset="0.6117" stop-color="rgb(132,132,132)"/><stop offset="0.6915" stop-color="rgb(142,142,142)"/><stop offset="0.7713" stop-color="rgb(153,153,153)"/><stop offset="0.8245" stop-color="rgb(164,164,164)"/><stop offset="0.8670" stop-color="rgb(178,178,178)"/><stop offset="0.9043" stop-color="rgb(194,194,194)"/><stop offset="0.9362" stop-color="rgb(205,205,205)"/><stop offset="0.9681" stop-color="rgb(212,212,212)"/><stop offset="1.0000" stop-color="rgb(212,212,212)"/></linearGradient>
<linearGradient id="gp2" x1="0" y1="0" x2="0" y2="1"><stop offset="0" stop-color="#000" stop-opacity="0.2"/><stop offset="0.72" stop-color="#000" stop-opacity="0.27"/><stop offset="0.88" stop-color="#000" stop-opacity="0.12"/><stop offset="0.96" stop-color="#000" stop-opacity="0.02"/><stop offset="1" stop-color="#000" stop-opacity="0"/></linearGradient>
<linearGradient id="gn2" x1="0" y1="0" x2="0" y2="1"><stop offset="0" stop-color="#000" stop-opacity="0.8"/><stop offset="0.7" stop-color="#000" stop-opacity="0.7"/><stop offset="0.85" stop-color="#000" stop-opacity="0.35"/><stop offset="1" stop-color="#000" stop-opacity="0.08"/></linearGradient>
<linearGradient id="gw2" x1="0" y1="0" x2="0" y2="1"><stop offset="0" stop-color="#000" stop-opacity="0.1"/><stop offset="0.7" stop-color="#000" stop-opacity="0.08"/><stop offset="1" stop-color="#000" stop-opacity="0"/></linearGradient>
<linearGradient id="ge2" x1="0" y1="0" x2="1" y2="0"><stop offset="0" stop-color="#000" stop-opacity="0"/><stop offset="0.3" stop-color="#000" stop-opacity="0.1"/><stop offset="1" stop-color="#000" stop-opacity="0.62"/></linearGradient>
<linearGradient id="gs2" x1="0" y1="0" x2="1" y2="0"><stop offset="0" stop-color="#000" stop-opacity="0.5"/><stop offset="1" stop-color="#000" stop-opacity="0"/></linearGradient>
<filter id="bl2" x="-20%" y="-5%" width="140%" height="110%"><feGaussianBlur stdDeviation="1.3 0"/></filter>
<filter id="fU2" x="0" y="0" width="100%" height="100%" color-interpolation-filters="sRGB"><feTurbulence type="fractalNoise" baseFrequency="0.5 0.02" numOctaves="2" seed="7"/><feColorMatrix type="matrix" values="1 0 0 0 0  1 0 0 0 0  1 0 0 0 0  0 0 0 0 1"/><feComposite in="SourceGraphic" operator="arithmetic" k1="0" k2="1.5" k3="0.3" k4="-0.65"/><feComponentTransfer><feFuncR type="table" tableValues="0.031 0.098 0.216 0.384 0.557 0.714 0.878 0.980 1.000 1.000 1.000 1.000 1.000 1.000 1.000 1.000 1.000 1.000"/><feFuncG type="table" tableValues="0.000 0.000 0.000 0.008 0.047 0.078 0.071 0.059 0.078 0.098 0.137 0.235 0.392 0.588 0.804 0.941 1.000 1.000"/><feFuncB type="table" tableValues="0.157 0.275 0.412 0.549 0.604 0.588 0.384 0.157 0.078 0.071 0.059 0.059 0.078 0.137 0.235 0.392 0.588 0.725"/></feComponentTransfer></filter>
<filter id="fL2" x="0" y="0" width="100%" height="100%" color-interpolation-filters="sRGB"><feTurbulence type="fractalNoise" baseFrequency="0.55 0.01" numOctaves="2" seed="11"/><feColorMatrix type="matrix" values="1 0 0 0 0  1 0 0 0 0  1 0 0 0 0  0 0 0 0 1" result="n"/><feComponentTransfer in="n" result="n3"><feFuncR type="gamma" amplitude="2" exponent="3"/><feFuncG type="gamma" amplitude="2" exponent="3"/><feFuncB type="gamma" amplitude="2" exponent="3"/></feComponentTransfer><feComposite in="SourceGraphic" in2="n" operator="arithmetic" k1="0.5000" k2="0.6500" k3="0.0000" k4="-0.0000" result="A"/><feComposite in="A" in2="n3" operator="arithmetic" k1="-1.1700" k2="2.2925" k3="0.8400" k4="-0.7100"/><feComponentTransfer><feFuncR type="table" tableValues="0.031 0.098 0.216 0.384 0.557 0.714 0.878 0.980 1.000 1.000 1.000 1.000 1.000 1.000 1.000 1.000 1.000 1.000"/><feFuncG type="table" tableValues="0.000 0.000 0.000 0.008 0.047 0.078 0.071 0.059 0.078 0.098 0.137 0.235 0.392 0.588 0.804 0.941 1.000 1.000"/><feFuncB type="table" tableValues="0.157 0.275 0.412 0.549 0.604 0.588 0.384 0.157 0.078 0.071 0.059 0.059 0.078 0.137 0.235 0.392 0.588 0.725"/></feComponentTransfer></filter>
</defs>
<g filter="url(#fU2)"><rect width="1485" height="150" fill="url(#gU2)"/></g>
<g transform="translate(0,150)"><g filter="url(#fL2)"><rect width="1485" height="196" fill="url(#gL2)"/><rect x="0" y="0" width="170" height="196" fill="url(#gw2)"/><rect x="727" y="0" width="120" height="196" fill="url(#gp2)"/><rect x="168.5" y="0" width="7.5" height="196" fill="url(#gn2)" filter="url(#bl2)"/><rect x="1461" y="0" width="24" height="196" fill="url(#ge2)"/></g></g>
</svg>
<div class="abs" style="left:317px;top:902px;width:1488px;height:12px;background:#505050;border-bottom:1px solid #c4c4c4"></div>
<svg class="abs" style="left:317px;top:902px" width="13" height="11"><path d="M0 0h1L12 10H0z" fill="#fff"/></svg>
<div class="abs" style="left:316px;top:914px;width:1604px;height:33px;background:#767676"></div>
<svg class="abs" style="left:316px;top:914px" width="1604" height="33" viewBox="316 914 1604 33" font-family="Liberation Sans, sans-serif" font-size="11.5" fill="#cfcfcf">
<path d="M318.5 914v10M336.6 914v5M354.8 914v10M372.9 914v5M391.0 914v10M409.1 914v5M427.2 914v10M445.4 914v5M463.5 914v10M481.6 914v5M499.8 914v10M517.9 914v5M536.0 914v10M554.1 914v5M572.2 914v10M590.4 914v5M608.5 914v10M626.6 914v5M644.8 914v10M662.9 914v5M681.0 914v10M699.1 914v5M717.2 914v10M735.4 914v5M753.5 914v10M771.6 914v5M789.8 914v10M807.9 914v5M826.0 914v10M844.1 914v5M862.2 914v10M880.4 914v5M898.5 914v10M916.6 914v5M934.8 914v10M952.9 914v5M971.0 914v10M989.1 914v5M1007.2 914v10M1025.4 914v5M1043.5 914v10M1061.6 914v5M1079.8 914v10M1097.9 914v5M1116.0 914v10M1134.1 914v5M1152.2 914v10M1170.4 914v5M1188.5 914v10M1206.6 914v5M1224.8 914v10M1242.9 914v5M1261.0 914v10M1279.1 914v5M1297.2 914v10M1315.4 914v5M1333.5 914v10M1351.6 914v5M1369.8 914v10M1387.9 914v5M1406.0 914v10M1424.1 914v5M1442.2 914v10M1460.4 914v5M1478.5 914v10M1496.6 914v5M1514.8 914v10M1532.9 914v5M1551.0 914v10M1569.1 914v5M1587.2 914v10M1605.4 914v5M1623.5 914v10M1641.6 914v5M1659.8 914v10M1677.9 914v5M1696.0 914v10M1714.1 914v5M1732.2 914v10M1750.4 914v5M1768.5 914v10M1786.6 914v5" stroke="#d8d8d8" stroke-width="1.3"/>
<text x="318" y="939">hms</text>
<text x="391.5" y="940" text-anchor="middle">0:20</text><text x="427.8" y="940" text-anchor="middle">0:30</text><text x="464.0" y="940" text-anchor="middle">0:40</text><text x="500.2" y="940" text-anchor="middle">0:50</text><text x="536.5" y="940" text-anchor="middle">1:00</text><text x="572.8" y="940" text-anchor="middle">1:10</text><text x="609.0" y="940" text-anchor="middle">1:20</text><text x="645.2" y="940" text-anchor="middle">1:30</text><text x="681.5" y="940" text-anchor="middle">1:40</text><text x="717.8" y="940" text-anchor="middle">1:50</text><text x="754.0" y="940" text-anchor="middle">2:00</text><text x="790.2" y="940" text-anchor="middle">2:10</text><text x="826.5" y="940" text-anchor="middle">2:20</text><text x="862.8" y="940" text-anchor="middle">2:30</text><text x="899.0" y="940" text-anchor="middle">2:40</text><text x="935.2" y="940" text-anchor="middle">2:50</text><text x="971.5" y="940" text-anchor="middle">3:00</text><text x="1007.8" y="940" text-anchor="middle">3:10</text><text x="1044.0" y="940" text-anchor="middle">3:20</text><text x="1080.2" y="940" text-anchor="middle">3:30</text><text x="1116.5" y="940" text-anchor="middle">3:40</text><text x="1152.8" y="940" text-anchor="middle">3:50</text><text x="1189.0" y="940" text-anchor="middle">4:00</text><text x="1225.2" y="940" text-anchor="middle">4:10</text><text x="1261.5" y="940" text-anchor="middle">4:20</text><text x="1297.8" y="940" text-anchor="middle">4:30</text><text x="1334.0" y="940" text-anchor="middle">4:40</text><text x="1370.2" y="940" text-anchor="middle">4:50</text><text x="1406.5" y="940" text-anchor="middle">5:00</text><text x="1442.8" y="940" text-anchor="middle">5:10</text><text x="1479.0" y="940" text-anchor="middle">5:20</text><text x="1515.2" y="940" text-anchor="middle">5:30</text><text x="1551.5" y="940" text-anchor="middle">5:40</text><text x="1587.8" y="940" text-anchor="middle">5:50</text><text x="1624.0" y="940" text-anchor="middle">6:00</text><text x="1660.2" y="940" text-anchor="middle">6:10</text><text x="1696.5" y="940" text-anchor="middle">6:20</text><text x="1732.8" y="940" text-anchor="middle">6:30</text><text x="1769.0" y="940" text-anchor="middle">6:40</text>
</svg>
<svg class="abs" style="left:1804px;top:193px" width="116" height="754" viewBox="1804 193 116 754" font-family="Liberation Sans, sans-serif" font-size="11.5" fill="#d4d4d4">
<rect x="1805" y="196" width="1.5" height="718" fill="#d4d4d4"/>
<text x="1820" y="206">Hz</text>
<text x="1820" y="530.3">5000</text><text x="1820" y="497.5">10000</text><text x="1820" y="464.7">15000</text><text x="1820" y="431.9">20000</text><text x="1820" y="399.1">25000</text><text x="1820" y="366.3">30000</text><text x="1820" y="333.5">35000</text><text x="1820" y="300.7">40000</text><text x="1820" y="267.9">45000</text><text x="1820" y="235.1">50000</text><text x="1820" y="874.0">5000</text><text x="1820" y="841.2">10000</text><text x="1820" y="808.4">15000</text><text x="1820" y="775.6">20000</text><text x="1820" y="742.8">25000</text><text x="1820" y="710.0">30000</text><text x="1820" y="677.2">35000</text><text x="1820" y="644.4">40000</text><text x="1820" y="611.6">45000</text><text x="1820" y="578.8">50000</text>
<path d="M1806 558.5h9M1806 551.9h4.5M1806 545.4h4.5M1806 538.8h4.5M1806 532.3h4.5M1806 525.7h9M1806 519.1h4.5M1806 512.6h4.5M1806 506.0h4.5M1806 499.5h4.5M1806 492.9h9M1806 486.3h4.5M1806 479.8h4.5M1806 473.2h4.5M1806 466.7h4.5M1806 460.1h9M1806 453.5h4.5M1806 447.0h4.5M1806 440.4h4.5M1806 433.9h4.5M1806 427.3h9M1806 420.7h4.5M1806 414.2h4.5M1806 407.6h4.5M1806 401.1h4.5M1806 394.5h9M1806 387.9h4.5M1806 381.4h4.5M1806 374.8h4.5M1806 368.3h4.5M1806 361.7h9M1806 355.1h4.5M1806 348.6h4.5M1806 342.0h4.5M1806 335.5h4.5M1806 328.9h9M1806 322.3h4.5M1806 315.8h4.5M1806 309.2h4.5M1806 302.7h4.5M1806 296.1h9M1806 289.5h4.5M1806 283.0h4.5M1806 276.4h4.5M1806 269.9h4.5M1806 263.3h9M1806 256.7h4.5M1806 250.2h4.5M1806 243.6h4.5M1806 237.1h4.5M1806 230.5h9M1806 223.9h4.5M1806 902.2h9M1806 895.6h4.5M1806 889.1h4.5M1806 882.5h4.5M1806 876.0h4.5M1806 869.4h9M1806 862.8h4.5M1806 856.3h4.5M1806 849.7h4.5M1806 843.2h4.5M1806 836.6h9M1806 830.0h4.5M1806 823.5h4.5M1806 816.9h4.5M1806 810.4h4.5M1806 803.8h9M1806 797.2h4.5M1806 790.7h4.5M1806 784.1h4.5M1806 777.6h4.5M1806 771.0h9M1806 764.4h4.5M1806 757.9h4.5M1806 751.3h4.5M1806 744.8h4.5M1806 738.2h9M1806 731.6h4.5M1806 725.1h4.5M1806 718.5h4.5M1806 712.0h4.5M1806 705.4h9M1806 698.8h4.5M1806 692.3h4.5M1806 685.7h4.5M1806 679.2h4.5M1806 672.6h9M1806 666.0h4.5M1806 659.5h4.5M1806 652.9h4.5M1806 646.4h4.5M1806 639.8h9M1806 633.2h4.5M1806 626.7h4.5M1806 620.1h4.5M1806 613.6h4.5M1806 607.0h9M1806 600.4h4.5M1806 593.9h4.5M1806 587.3h4.5M1806 580.8h4.5M1806 574.2h9M1806 567.6h4.5" stroke="#d4d4d4" stroke-width="1.2"/>
<rect x="1866.5" y="219.5" width="15" height="696" fill="#000" stroke="#9a9a9a" stroke-width="1"/><rect x="1880.5" y="220" width="1.4" height="696" fill="#f0f0f0"/><rect x="1867" y="915" width="15" height="1.3" fill="#f0f0f0"/><rect x="1892.5" y="219.5" width="15" height="696" fill="#000" stroke="#9a9a9a" stroke-width="1"/><rect x="1906.5" y="220" width="1.4" height="696" fill="#f0f0f0"/><rect x="1893" y="915" width="15" height="1.3" fill="#f0f0f0"/><rect x="1918.5" y="193" width="1.5" height="754" fill="#e4e4e4"/>
</svg>
<!-- transport -->
<div class="abs" style="left:316px;top:947px;width:1604px;height:101px;background:#efefef;border-bottom:1px solid #c0c0c0"></div>
<div class="abs" style="left:652px;top:950px;width:1px;height:95px;background:#b8b8b8"></div>
<div class="abs" style="left:1552px;top:950px;width:1px;height:95px;background:#b8b8b8"></div>
<div class="abs" id="bigt" style="left:831px;top:949px;font-size:92.8px;line-height:110px;color:#000;white-space:nowrap;transform:scaleX(.956);transform-origin:0 0">00<span style="padding:0 2.8px">:</span>00<span style="padding:0 2.8px">:</span>00<span style="padding:0 0px">.</span>000</div>
<style>
.tg{position:absolute;height:33px;border:1px solid #a6a6a6;border-radius:3px;background:linear-gradient(#fafafa,#ececec 60%,#dedede);box-shadow:0 1px 1px rgba(0,0,0,.15)}
.tg i{position:absolute;top:1px;bottom:1px;width:1px;background:#d0d0d0;border-right:1px solid #fbfbfb;width:2px}
.tl{position:absolute;font-size:13.5px;color:#1a1a1a;white-space:nowrap;line-height:16px}
.tf{position:absolute;width:88px;height:23px;background:#fff;border:1px solid #b4b4b4;box-shadow:inset 1px 1px 0 #e2e2e2;font-size:13.5px;line-height:21px;color:#1a1a1a;padding-left:3px;white-space:nowrap;letter-spacing:-.1px}
</style>
<div class="tg" style="left:324px;top:964px;width:172px"><i style="left:31px"></i><i style="left:66px"></i><i style="left:101px"></i><i style="left:136px"></i></div>
<div class="tg" style="left:324px;top:1000px;width:172px"><i style="left:31px"></i><i style="left:66px"></i><i style="left:101px"></i><i style="left:136px"></i></div>
<div class="tg" style="left:506px;top:964px;width:138px"><i style="left:31.500px"></i><i style="left:66px"></i><i style="left:101.500px"></i></div>
<div class="tg" style="left:506px;top:1000px;width:138px"><i style="left:31.500px"></i><i style="left:66px"></i><i style="left:101.500px"></i></div>
<div class="tl" style="left:1633px;top:960px">Start</div>
<div class="tl" style="left:1724px;top:960px">End</div>
<div class="tl" style="left:1819px;top:961px">Length</div>
<div class="tl" style="left:1565px;top:981px">Selection</div>
<div class="tl" style="left:1591px;top:1011px">View</div>
<div class="tf" style="left:1633px;top:978px">00:00:00.000</div>
<div class="tf" style="left:1725px;top:978px">00:00:00.000</div>
<div class="tf" style="left:1818px;top:978px">00:00:00.000</div>
<div class="tf" style="left:1633px;top:1008px">00:00:00.000</div>
<div class="tf" style="left:1725px;top:1008px">00:06:49.171</div>
<div class="tf" style="left:1818px;top:1008px">00:06:49.171</div>
<!-- transport icons -->
<svg class="abs" style="left:320px;top:960px" width="330" height="76" viewBox="320 960 330 76">
<defs><linearGradient id="tG" x1="0" y1="0" x2="0" y2="1"><stop offset="0" stop-color="#7a7a7a"/><stop offset="1" stop-color="#4e4e4e"/></linearGradient>
<g id="mag"><path d="M4.400 4.200l5.600 5" stroke="#6c6c6c" stroke-width="4" stroke-linecap="round"/><circle cx="0" cy="0" r="5.800" fill="#ececec" stroke="#585858" stroke-width="2.400"/></g>
</defs>
<g fill="url(#tG)">
 <path d="M334.500 972v15l14.500-7.500z"/>
 <path d="M399 972v15l13.500-7.500z"/><rect x="415" y="972" width="3.600" height="15"/>
 <path d="M444.500 973v13.500l-10.500-6.750zM454 973v13.500l-10.500-6.750z"/>
 <path d="M469 973v13.500l10.500-6.750zM478.500 973v13.500l10.500-6.750z"/>
 <rect x="335" y="1009" width="11.500" height="11.500"/>
 <rect x="368.500" y="1009" width="3.800" height="11.500"/><rect x="375" y="1009" width="3.800" height="11.500"/>
 <path d="M446 1008.500v13l-9.500-6.500zM454.500 1008.500v13l-9.500-6.500z"/>
 <path d="M467.500 1008.500v13l9.500-6.500zM476 1008.500v13l9.500-6.500z"/>
</g>
<g fill="none" stroke="#5c5c5c">
 <path d="M369 975.200h-3.700v9h16v-9h-4.500" stroke-width="2.600" stroke-linejoin="round"/>
 <path d="M433 1005.500h5M433 1023.500h5M435.500 1005.500v18" stroke-width="1.800"/>
 <path d="M484 1005.500h5M484 1023.500h5M486.500 1005.500v18" stroke-width="1.800"/>
 <path d="M515.500 1005.500h-3v17.500h3" stroke-width="2"/>
 <path d="M598.500 1005.500h3v17.500h-3" stroke-width="2"/>
</g>
<path d="M370 970.500l6.500 4.500-6.500 4.500z" fill="#5c5c5c"/>
<circle cx="408" cy="1014.500" r="5.800" fill="#8c0a0a"/><circle cx="407" cy="1013" r="2.500" fill="#a81818" opacity=".6"/>
<!-- zoom icons -->
<use href="#mag" x="520.700" y="977.100"/><path d="M517.700 977.100h6M520.700 974.100v6" stroke="#4a4a4a" stroke-width="1.300"/>
<use href="#mag" x="553.100" y="977.100"/><path d="M550.100 977.100h6" stroke="#4a4a4a" stroke-width="1.300"/>
<use href="#mag" x="589" y="976.700"/><text x="579.500" y="989.800" font-family="Liberation Sans, sans-serif" font-size="6.500" font-weight="bold" fill="#3c3c3c">100</text>
<use href="#mag" x="626.600" y="976.700"/><path d="M612.300 973.500l3-3.800 3 3.800h-1.800v3.200h-2.400v-3.200zM612.300 982.200l3 3.800 3-3.800h-1.800v-3.200h-2.400v3.200z" fill="#4a4a4a"/>
<use href="#mag" x="523.400" y="1011.900"/>
<use href="#mag" x="553.100" y="1011.900"/><path d="M550.600 1009.400h1.600M554 1009.400h1.600M550.600 1014.400h1.600M554 1014.400h1.600M550.800 1009.200v1.600M555.400 1009.200v1.600M550.800 1013v1.600M555.400 1013v1.600" stroke="#4a4a4a" stroke-width="1.100"/>
<g transform="translate(1181.200,0) scale(-1,1)"><use href="#mag" x="590.600" y="1011.900"/></g>
<use href="#mag" x="626.600" y="1011.900"/><path d="M612.300 1007.800l3 3.800 3-3.800h-1.800v-3h-2.400v3zM612.300 1018.600l3-3.800 3 3.800h-1.800v2.600h-2.400v-2.600z" fill="#4a4a4a"/>
</svg>
<!-- status bar -->
<div class="abs" style="left:0;top:1048px;width:1920px;height:30px;background:linear-gradient(#f2f2f2,#e6e6e6 50%,#d6d6d6)"></div>
<div class="abs" style="left:1284px;top:1051px;width:2px;height:25px;background:linear-gradient(90deg,#b0b0b0 50%,#f8f8f8 50%)"></div>
<div class="abs" style="left:1679px;top:1051px;width:2px;height:25px;background:linear-gradient(90deg,#b0b0b0 50%,#f8f8f8 50%)"></div>
<div class="abs" style="left:1800px;top:1051px;width:2px;height:25px;background:linear-gradient(90deg,#b0b0b0 50%,#f8f8f8 50%)"></div>
<div class="abs" style="left:1915px;top:1051px;width:2px;height:25px;background:linear-gradient(90deg,#b0b0b0 50%,#f8f8f8 50%)"></div>
<div class="tl" style="left:1291px;top:1057px">96000 Hz, 24-bit, 2 Channels</div>
<div class="tl" style="left:1688px;top:1057px">224.764 Mb</div>
<div class="tl" style="left:1808px;top:1057px">00:06:49.171</div>
<div class="abs" style="left:0;top:1078px;width:1920px;height:2px;background:#3a3a3a"></div>
<div class="abs" style="left:60px;top:1078px;width:360px;height:2px;background:#f4f4f4"></div>
</body></html>
